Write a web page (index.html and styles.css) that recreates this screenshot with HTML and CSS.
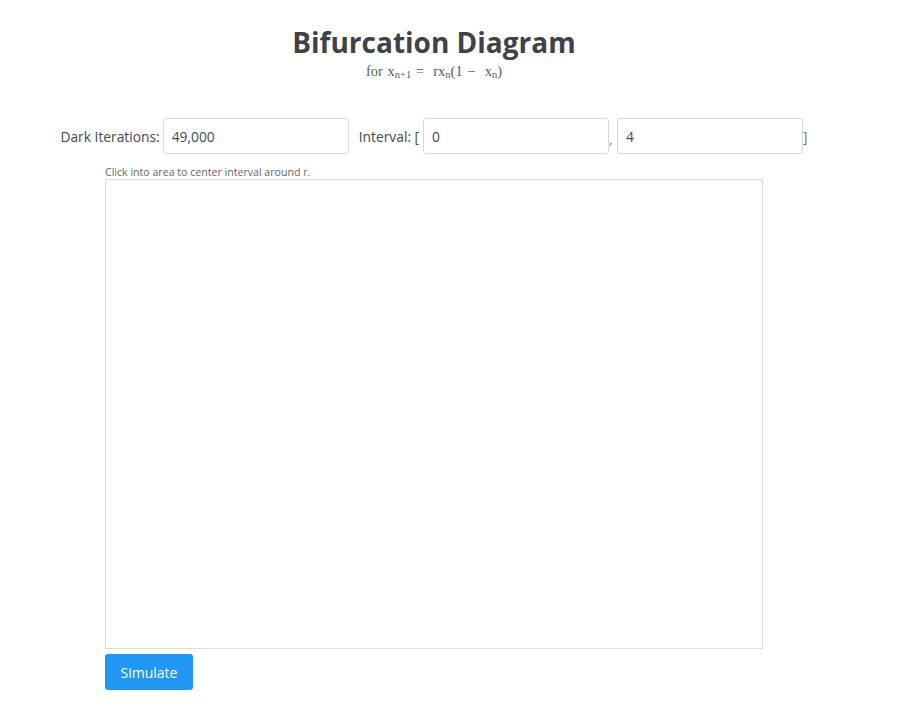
FILE: index.html
```html
<!DOCTYPE html>
<html>
<head>
<meta charset="utf-8">
<link rel="stylesheet" href="styles.css">
</head>
<body>
<div class="page">
  <header class="head">
    <h1 class="title">Bifurcation Diagram</h1>
    <div class="formula">for x<sub>n+1</sub> = &nbsp;rx<sub>n</sub>(1 &minus; &nbsp;x<sub>n</sub>)</div>
  </header>
  <div class="controls">
    <label class="lbl lbl-dark">Dark Iterations:</label>
    <input class="field" type="text" value="49,000">
    <label class="lbl lbl-int">Interval: [</label>
    <input class="field" type="text" value="0">
    <span class="sep">,</span>
    <input class="field" type="text" value="4">
    <span class="sep close">]</span>
  </div>
  <section class="area">
    <div class="hint">Click into area to center interval around r.</div>
    <div class="canvas"></div>
    <button class="btn">Simulate</button>
  </section>
</div>
</body>
</html>
```
FILE: styles.css
```css
html, body {
  margin: 0;
  padding: 0;
  background: #fff;
}
body {
  font-family: "Open Sans", "Noto Sans", sans-serif;
  color: #454850;
}
.page {
  width: 868px;
}
.head {
  text-align: center;
  padding-top: 23px;
}
.title {
  margin: 0;
  font-size: 28px;
  line-height: 38px;
  font-weight: 700;
  color: #3f4248;
}
.formula {
  font-family: "Liberation Serif", "DejaVu Serif", serif;
  font-size: 14.5px;
  line-height: 18px;
  color: #5a5a5a;
  margin-top: 1px;
  word-spacing: 1px;
}
.formula sub {
  font-size: 10.5px;
  vertical-align: -2px;
  line-height: 0;
}
.controls {
  display: flex;
  justify-content: center;
  align-items: center;
  margin-top: 38px;
  height: 36px;
  font-size: 13.8px;
}
.lbl {
  color: #454850;
}
.lbl-dark {
  margin-right: 3px;
}
.lbl-int {
  margin-left: 10px;
  margin-right: 4px;
}
.field {
  box-sizing: border-box;
  width: 186px;
  height: 36px;
  border: 1px solid #d9d9d9;
  border-radius: 3px;
  padding: 0 8px;
  font-family: "Open Sans", "Noto Sans", sans-serif;
  font-size: 13.8px;
  color: #454850;
  outline: none;
}
.sep {
  width: 8px;
  color: #777;
  font-size: 12px;
  align-self: flex-end;
  padding-bottom: 6px;
}
.sep.close {
  width: auto;
  align-self: center;
  padding: 0;
  font-size: 13.8px;
}
.area {
  width: 658px;
  margin: 11px auto 0;
}
.hint {
  font-size: 10.6px;
  line-height: 14px;
  color: #666;
}
.canvas {
  box-sizing: border-box;
  height: 470px;
  border: 1px solid #dcdcdc;
}
.btn {
  margin-top: 5px;
  width: 88px;
  height: 36px;
  border: none;
  border-radius: 3px;
  background: #2196f3;
  color: #fff;
  font-family: "Open Sans", "Noto Sans", sans-serif;
  font-size: 14px;
  cursor: pointer;
}
```
